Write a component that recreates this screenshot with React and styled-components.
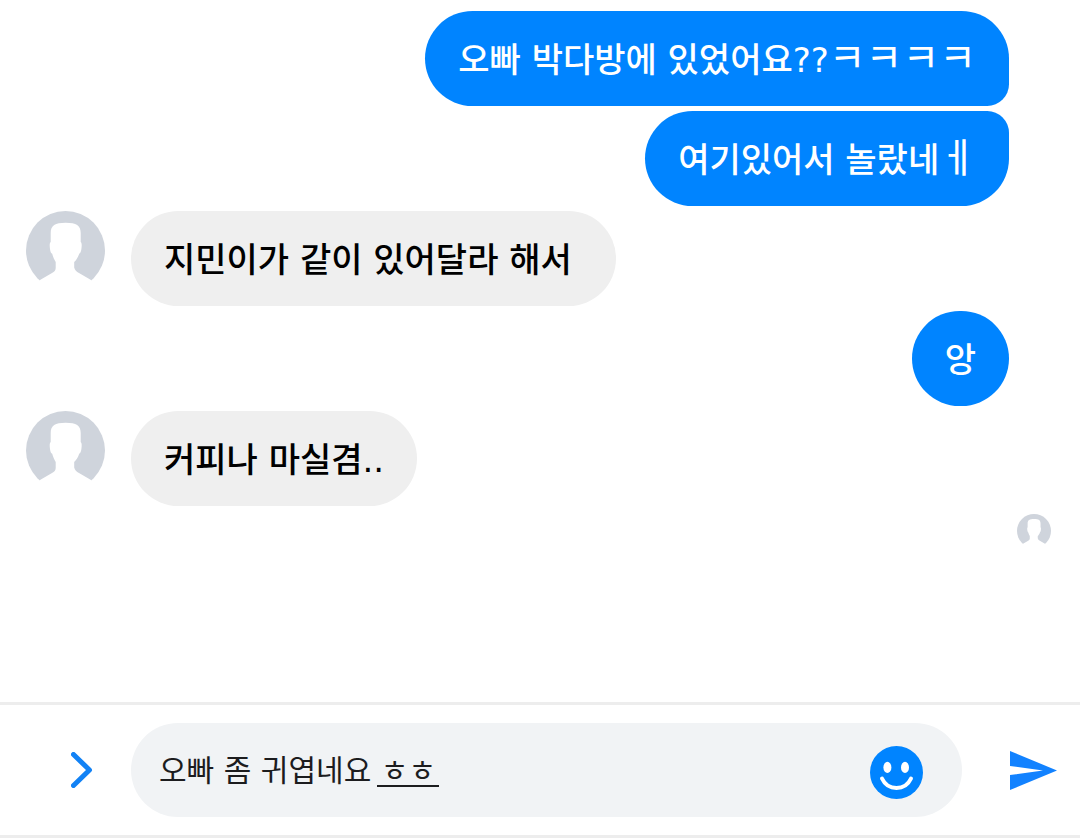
import React, { useState } from "react";
import styled, { createGlobalStyle } from "styled-components";

const GlobalStyle = createGlobalStyle`
  * {
    box-sizing: border-box;
  }
  body {
    margin: 0;
    background-color: #fff;
    font-family: "DejaVu Sans", "Noto Sans CJK KR", sans-serif;
  }
`;

const AppContainer = styled.div`
  display: flex;
  flex-direction: column;
  min-height: 100vh;
`;

const Messages = styled.main`
  flex: 1;
  display: flex;
  flex-direction: column;
  gap: 5px;
  padding: 11px 29px 0 26px;
`;

const Row = styled.div`
  display: flex;
  align-items: flex-start;
  gap: 26px;
  justify-content: ${(props) => (props.$mine ? "flex-end" : "flex-start")};
  padding-right: 42px;
`;

const Bubble = styled.p`
  margin: 0;
  min-height: 95px;
  padding: 22px 33px 18px;
  line-height: 55px;
  font-size: 34px;
  font-weight: 500;
  white-space: pre-wrap;
  color: ${(props) => (props.$mine ? "#fff" : "#000")};
  background-color: ${(props) => (props.$mine ? "#0084ff" : "#efefef")};
  border-radius: 48px;
  border-bottom-right-radius: ${(props) => (props.$joinBottom ? 22 : 48)}px;
  border-top-right-radius: ${(props) => (props.$joinTop ? 22 : 48)}px;
`;

// loose consonants and vowels are set wider than full syllables
const Jamo = styled.span`
  font-size: 40px;
  font-weight: 400;
  line-height: 1;
`;

const Avatar = styled.svg`
  flex: none;
  display: block;
  width: ${(props) => props.$size}px;
  height: ${(props) => props.$size}px;
`;

const Seen = styled.div`
  display: flex;
  justify-content: flex-end;
  padding-top: 3px;
`;

const Composer = styled.form`
  display: flex;
  align-items: center;
  padding: 18px 0;
  border-top: 3px solid #ededed;
  border-bottom: 3px solid #ededed;
`;

const IconButton = styled.button`
  flex: none;
  display: flex;
  align-items: center;
  border: none;
  background: none;
  padding: 0;
  cursor: pointer;
`;

const MoreButton = styled(IconButton)`
  width: 131px;
  padding-left: 71px;
`;

const SendButton = styled(IconButton)`
  width: 118px;
  padding-left: 48px;
`;

const Field = styled.div`
  position: relative;
  flex: 1;
  min-width: 0;
  display: flex;
  align-items: center;
  height: 94px;
  padding: 4px 39px 0 28px;
  border-radius: 47px;
  background-color: #f1f3f5;
`;

const TextInput = styled.input`
  flex: 1;
  min-width: 0;
  height: 50px;
  padding: 0 0 8px;
  border: none;
  outline: none;
  background: none;
  font-family: inherit;
  font-size: 30px;
  color: #1c1c1e;
`;

// mark under the syllables that are still being composed
const Composing = styled.span`
  position: absolute;
  left: 246px;
  top: 62px;
  width: 62px;
  height: 2px;
  background-color: #1c1c1e;
`;

function Person({ size }) {
  return (
    <Avatar $size={size} viewBox="0 0 79 79" aria-hidden="true">
      <circle cx="39.5" cy="39.5" r="39.5" fill="#cfd4dc" />
      <path
        d="M24.7 31 V22 C24.7 14.5 29 11.7 39.7 11.7 C50.4 11.7 54.7 14.5 54.7 22 V31 C56 32 55.8 35 55.4 38 C55 41 54 42.5 53.2 42.8 C52 46.5 50 49.5 48.2 51 L48.2 56.5 C48.8 59 50.5 60.8 53 62 L65 69 V79 H14 V69 L26 62 C28.5 60.8 29.5 59.5 29.7 57 L29.7 51 C28.5 49 27 46 26.2 42.8 C25.2 42.5 24.4 41 24 38 C23.6 35 23.4 32 24.7 31 Z"
        fill="#fff"
      />
    </Avatar>
  );
}

function App() {
  const [text, setText] = useState("오빠 좀 귀엽네요 ㅎㅎ");

  return (
    <AppContainer>
      <GlobalStyle />
      <Messages>
        <Row $mine>
          <Bubble $mine $joinBottom>
            오빠 박다방에 있었어요??<Jamo>ㅋㅋㅋㅋ</Jamo>
          </Bubble>
        </Row>
        <Row $mine>
          <Bubble $mine $joinTop>
            여기있어서 놀랐네<Jamo>ㅔ</Jamo>
          </Bubble>
        </Row>
        <Row>
          <Person size={79} />
          <Bubble>{"지민이가 같이 있어달라 해서 "}</Bubble>
        </Row>
        <Row $mine>
          <Bubble $mine>앙</Bubble>
        </Row>
        <Row>
          <Person size={79} />
          <Bubble>커피나 마실겸..</Bubble>
        </Row>
        <Seen>
          <Person size={34} />
        </Seen>
      </Messages>
      <Composer onSubmit={(e) => e.preventDefault()}>
        <MoreButton type="button" aria-label="더 보기">
          <svg width="22" height="36" viewBox="0 0 22 36" fill="none">
            <path
              d="M2.5 2.5 L18.5 18 L2.5 33.5"
              stroke="#1282f5"
              strokeWidth="5"
              strokeLinecap="round"
              strokeLinejoin="round"
            />
          </svg>
        </MoreButton>
        <Field>
          <TextInput
            type="text"
            aria-label="메시지"
            value={text}
            onChange={(e) => setText(e.target.value)}
          />
          {text.endsWith("ㅎㅎ") && <Composing />}
          <IconButton type="button" aria-label="이모티콘">
            <svg width="53" height="53" viewBox="0 0 53 53" fill="none">
              <circle cx="26.5" cy="26.5" r="26.5" fill="#0084ff" />
              <ellipse cx="17.4" cy="21.4" rx="4" ry="5.6" fill="#fff" />
              <ellipse cx="35" cy="21.4" rx="4" ry="5.6" fill="#fff" />
              <path
                d="M12 32.5 C15 39 20 42 26.5 42 C33 42 38 39 41 32.5"
                stroke="#fff"
                strokeWidth="4"
                strokeLinecap="round"
              />
            </svg>
          </IconButton>
        </Field>
        <SendButton type="submit" aria-label="보내기">
          <svg width="47" height="39" viewBox="0 0 47 39">
            <path d="M0 0 L47 19.5 L0 39 V24 L33 19.5 L0 15 Z" fill="#1282ff" />
          </svg>
        </SendButton>
      </Composer>
    </AppContainer>
  );
}

export default App;
